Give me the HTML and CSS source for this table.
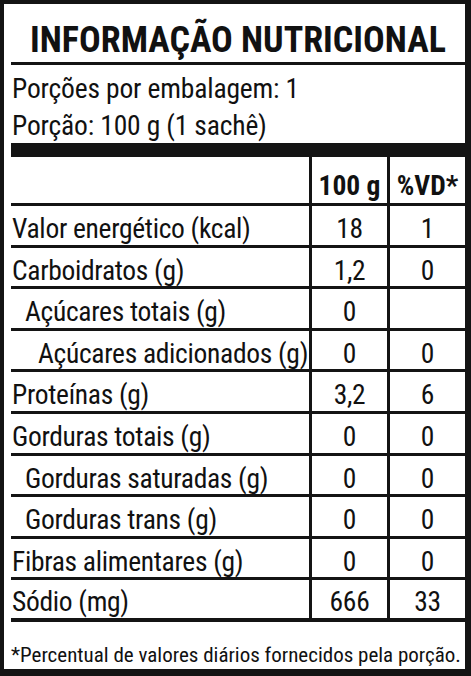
FILE: index.html
```html
<!DOCTYPE html>
<html lang="pt-BR">
<head>
<meta charset="utf-8">
<title>Informação Nutricional</title>
<link rel="stylesheet" href="styles.css">
</head>
<body>
<div class="label">
  <h1 class="title">INFORMAÇÃO NUTRICIONAL</h1>
  <div class="serving">
    <p>Porções por embalagem: 1</p>
    <p>Porção: 100 g (1 sachê)</p>
  </div>
  <div class="table">
    <div class="cell name head"></div>
    <div class="cell val head">100 g</div>
    <div class="cell val head">%VD*</div>

    <div class="cell name">Valor energético (kcal)</div>
    <div class="cell val">18</div>
    <div class="cell val">1</div>

    <div class="cell name">Carboidratos (g)</div>
    <div class="cell val">1,2</div>
    <div class="cell val">0</div>

    <div class="cell name indent1">Açúcares totais (g)</div>
    <div class="cell val">0</div>
    <div class="cell val"></div>

    <div class="cell name indent2">Açúcares adicionados (g)</div>
    <div class="cell val">0</div>
    <div class="cell val">0</div>

    <div class="cell name">Proteínas (g)</div>
    <div class="cell val">3,2</div>
    <div class="cell val">6</div>

    <div class="cell name">Gorduras totais (g)</div>
    <div class="cell val">0</div>
    <div class="cell val">0</div>

    <div class="cell name indent1">Gorduras saturadas (g)</div>
    <div class="cell val">0</div>
    <div class="cell val">0</div>

    <div class="cell name indent1">Gorduras trans (g)</div>
    <div class="cell val">0</div>
    <div class="cell val">0</div>

    <div class="cell name">Fibras alimentares (g)</div>
    <div class="cell val">0</div>
    <div class="cell val">0</div>

    <div class="cell name last">Sódio (mg)</div>
    <div class="cell val last">666</div>
    <div class="cell val last">33</div>
  </div>
  <p class="footnote">*Percentual de valores diários fornecidos pela porção.</p>
</div>
</body>
</html>
```
FILE: styles.css
```css
html, body {
  margin: 0;
  padding: 0;
  background: #ffffff;
}

.label {
  width: 471px;
  height: 676px;
  box-sizing: border-box;
  border-style: solid;
  border-color: #141414;
  border-width: 4px 6px 7px 4px;
  padding-left: 7px;
  display: flex;
  flex-direction: column;
  background: #ffffff;
  color: #111111;
  font-family: "Roboto Condensed", "Roboto", sans-serif;
  font-stretch: condensed;
}

.title {
  margin: 0;
  border-bottom: 3px solid #141414;
  display: flex;
  align-items: flex-end;
  justify-content: center;
  padding-bottom: 4px;
  box-sizing: border-box;
  height: 61px;
  font-size: 36px;
  font-weight: bold;
  line-height: 1;
  white-space: nowrap;
}

.serving {
  padding: 5px 0 0 1px;
  height: 92px;
  box-sizing: border-box;
  border-bottom: 14px solid #141414;
}

.serving p {
  margin: 0;
  font-size: 27.5px;
  letter-spacing: -0.15px;
  line-height: 37px;
  white-space: nowrap;
}

.table {
  display: grid;
  grid-template-columns: minmax(0, 1fr) 78px 78px;
  grid-template-rows: 49px repeat(10, 41.6px);
}

.cell {
  box-sizing: border-box;
  border-bottom: 3px solid #141414;
  display: flex;
  align-items: flex-end;
  padding-bottom: 2px;
  font-size: 27.5px;
  letter-spacing: -0.3px;
  line-height: 1;
  white-space: nowrap;
  min-width: 0;
}

.cell.last {
  border-bottom-width: 4px;
}

.name {
  padding-left: 1px;
}

.name.indent1 {
  padding-left: 14px;
}

.name.indent2 {
  padding-left: 27px;
}

.val {
  border-left: 3px solid #141414;
  justify-content: center;
}

.head {
  font-weight: bold;
  font-size: 27.5px;
  letter-spacing: 0;
  padding-bottom: 4px;
}

.footnote {
  margin: 0;
  flex: 1;
  display: flex;
  align-items: flex-end;
  padding-bottom: 3px;
  font-size: 21px;
  line-height: 1;
  white-space: nowrap;
}
```
